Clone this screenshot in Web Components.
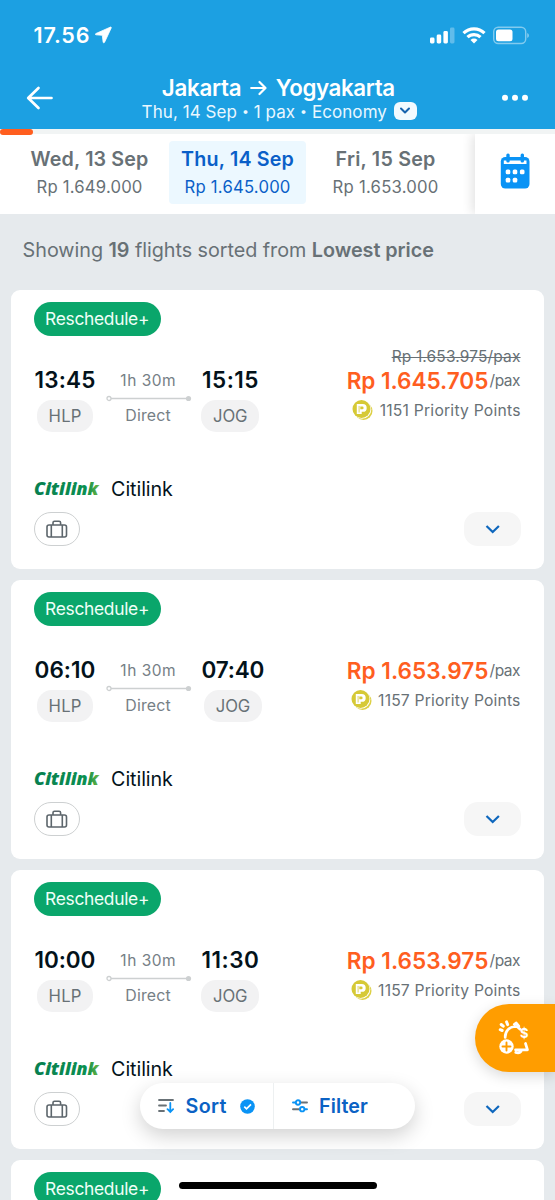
<!DOCTYPE html>
<html lang="en">
<head>
<meta charset="utf-8">
<title>Jakarta → Yogyakarta</title>
<style>
html,body{margin:0;padding:0}
body{width:555px;height:1200px;overflow:hidden;background:#e6eaed;font-family:Inter,"Liberation Sans",sans-serif}
</style>
</head>
<body>
<flight-search-page></flight-search-page>
<script>
const define = (name, html, after) => customElements.define(name, class extends HTMLElement {
  connectedCallback() {
    if (this.shadowRoot) return;
    const root = this.attachShadow({ mode: 'open' });
    root.innerHTML = typeof html === 'function' ? html(this) : html;
    if (after) after(this, root);
  }
});

/* One line of text: s size, b weight, l line height, w tracked width, d baseline drop */
define('text-line', el => { const d = +el.getAttribute('d') || 0; return `<style>
  :host{display:block;white-space:nowrap;font-family:Inter,"Liberation Sans",sans-serif}
  span{display:inline-block;vertical-align:top;margin-top:${d}px;margin-bottom:${-d}px;font-size:${el.getAttribute('s')}px;font-weight:${el.getAttribute('b') || 400};line-height:${el.getAttribute('l') || 24}px}
  </style><span><slot></slot></span>`; }, (el, root) => {
  const w = +el.getAttribute('w'), span = root.querySelector('span'), side = .6;
  if (!w) return;
  const n = el.textContent.length;
  const ls = (w - 2 * side - span.getBoundingClientRect().width) / (n - 1);
  span.style.letterSpacing = ls + 'px';
  span.style.marginLeft = side + 'px';
  span.style.marginRight = side - ls + 'px';
});

define('status-bar', `<style>
  :host{display:flex;height:70px;box-sizing:border-box;padding:0 26px 0 33px;align-items:center;color:#fff}
  .r{margin-left:auto}svg{display:block}.l{margin-left:5px}
  </style>
  <text-line s="21.5" b="600" w="57">17.56</text-line>
  <svg class="l" width="17" height="18" viewBox="0 0 17 18"><path d="M15.200 1.200 1 7.500C0 8 .2 8.700 1 8.800L7.300 9.300 8.100 16c.1 1 1 1.100 1.500.2L16.200 2C16.500 1.300 16 .8 15.200 1.200Z" fill="#fff" stroke="#fff" stroke-width=".8"/></svg>
  <svg class="r" width="102" height="20" viewBox="0 0 102 20" fill="#fff">
    <rect x="3" y="12.500" width="4.500" height="6" rx="1.400"/><rect x="9.700" y="9.500" width="4.500" height="9" rx="1.400"/><rect x="16.400" y="6" width="4.500" height="12.500" rx="1.400"/><rect x="23" y="2.500" width="4.500" height="16" rx="1.400" opacity=".3"/>
    <g fill="none" stroke="#fff" stroke-width="3.200"><path d="M36.500 8.200a15 15 0 0 1 21 0"/><path d="M40.500 12.200a9.300 9.300 0 0 1 13 0"/></g><path d="M43.500 15a5 5 0 0 1 7 0L47 18.600Z"/>
    <rect x="66.700" y="2.200" width="32" height="16.300" rx="4.500" fill="none" stroke="#fff" stroke-width="1.400" opacity=".45"/><rect x="69" y="4.500" width="16.500" height="11.800" rx="2.500"/><path d="M100.200 8v5q1.800-.8 1.800-2.500t-1.800-2.500" opacity=".45"/>
  </svg>`);

define('route-nav', `<style>
  :host{display:grid;grid-template-columns:27px 1fr 27px;height:59px;padding:0 26px;color:#fff}
  svg{display:block}.side{padding-top:15px}.c{padding-top:6px;display:flex;flex-direction:column;align-items:center}
  .sub{display:flex;gap:6px;align-items:center;color:#e9f7ff;margin-left:2.500px;height:24px}
  .title{display:flex;gap:8px;align-items:center;height:24px;margin-left:2px}
  .dot{font-size:.72em;vertical-align:.13em}
  .pill{width:23px;height:18px;border-radius:6px;background:#f2faff;display:grid;place-items:center;margin-top:-3px}
  </style>
  <svg class="side" width="28" height="26" viewBox="0 0 28 26"><path d="M12.500 3 2.200 13 12.500 23M2.500 13H25.500" fill="none" stroke="#fff" stroke-width="2.700" stroke-linecap="round" stroke-linejoin="round"/></svg>
  <div class="c"><div class="title"><text-line s="22.300" b="600" w="81">Jakarta</text-line>
    <svg width="17" height="16" viewBox="0 0 17 16"><path d="M1.200 8H15.500M9.500 2l6 6-6 6" fill="none" stroke="#fff" stroke-width="2.200" stroke-linecap="round" stroke-linejoin="round"/></svg>
    <text-line s="22.300" b="600" w="120.500">Yogyakarta</text-line></div>
    <div class="sub"><text-line s="17" w="246.500">Thu, 14 Sep <span class="dot">•</span> 1 pax <span class="dot">•</span> Economy</text-line><span class="pill"><svg width="12" height="8" viewBox="0 0 12 8"><path d="m2 1.500 4 4 4-4" fill="none" stroke="#1763ae" stroke-width="2" stroke-linecap="round" stroke-linejoin="round"/></svg></span></div></div>
  <svg class="side" width="28" height="26" viewBox="0 0 28 26" fill="#fff"><circle cx="3" cy="12.700" r="3"/><circle cx="13" cy="12.700" r="3"/><circle cx="23" cy="12.700" r="3"/></svg>`);

define('load-progress', `<style>:host{display:block;height:5px;background:#f1f4f4}
  div{width:33px;height:5.700px;border-radius:3px;background:#ff5e1f;position:relative}</style><div></div>`);

define('date-tab', el => `<style>
  :host{display:flex;flex-direction:column;align-items:center;width:137px;height:63px;box-sizing:border-box;padding-top:5px;gap:5px;border-radius:4px;color:#687176}
  :host([selected]){background:#ecf8ff;color:#0a5fc8}
  </style><text-line s="19.700" b="600" d="1" w="${el.getAttribute('dw')}">${el.getAttribute('day')}</text-line><text-line s="16.700" w="107">${el.getAttribute('price')}</text-line>`);

define('date-strip', `<style>
  :host{display:flex;height:80px;background:#fff;overflow:hidden}
  .tabs{display:flex;gap:11px;padding:7px 0 0 21px;width:454px}
  .cal{flex:1;box-shadow:-3px 0 10px #0000001c;display:flex;justify-content:center;padding-top:19px;background:#fff}
  </style><div class="tabs"><date-tab day="Wed, 13 Sep" dw="119" price="Rp 1.649.000"></date-tab>
  <date-tab selected day="Thu, 14 Sep" dw="114" price="Rp 1.645.000"></date-tab><date-tab day="Fri, 15 Sep" dw="101" price="Rp 1.653.000"></date-tab></div>
  <div class="cal"><svg width="30" height="36" viewBox="0 0 30 36"><rect x=".8" y="4" width="28.700" height="31.500" rx="4.500" fill="#0a93f5"/><rect x="3.800" y="7.500" width="22.700" height="3.500" fill="#fff"/><rect x="6.300" y=".5" width="3.400" height="9" rx="1.500" fill="#0a93f5"/><rect x="20.600" y=".5" width="3.400" height="9" rx="1.500" fill="#0a93f5"/>
  <g fill="#fff"><rect x="5.700" y="16.500" width="4.600" height="4.800" rx="1.500"/><rect x="12.700" y="16.500" width="4.600" height="4.800" rx="1.500"/><rect x="19.900" y="16.500" width="4.600" height="4.800" rx="1.500"/><rect x="5.700" y="24.800" width="4.600" height="4.800" rx="1.500"/><rect x="12.700" y="24.800" width="4.600" height="4.800" rx="1.500"/></g></svg></div>`);

define('result-summary', `<style>:host{display:block;height:76px;box-sizing:border-box;padding:24px 0 0 22px;color:#687176}b{font-weight:600}</style>
  <text-line s="19.800" w="412.500">Showing <b>19</b> flights sorted from <b>Lowest price</b></text-line>`);

define('airport-stop', el => `<style>
  :host{display:flex;flex-direction:column;gap:8px;align-items:center}
  .time{color:#03121a}.code{height:32px;padding:0 11.500px;border-radius:15px;background:#f2f2f3;color:#687176;display:flex;align-items:center}
  </style><text-line class="time" s="22.500" b="600" w="${el.getAttribute('tw')}">${el.getAttribute('time')}</text-line>
  <div class="code"><text-line s="16.700" w="${el.getAttribute('cw')}">${el.getAttribute('code')}</text-line></div>`);

define('flight-duration', `<style>:host{display:flex;flex-direction:column;align-items:center;width:86px;padding-bottom:6px;color:#768086}svg{display:block}text-line{margin-right:2px}</style>
  <text-line s="15.500" l="20" d="1" w="56.500">1h 30m</text-line>
  <svg width="86" height="16" viewBox="0 0 86 16"><path d="M5 8.500H81" stroke="#cdd0d1" stroke-width="1.300"/><circle cx="3" cy="8.500" r="2" fill="#fff" stroke="#cdd0d1" stroke-width="1.300"/><circle cx="82.500" cy="8.500" r="2.600" fill="#cdd0d1"/></svg>
  <text-line s="15.900" l="20" w="46.500">Direct</text-line>`);

define('price-block', el => `<style>
  :host{display:flex;flex-direction:column;align-items:flex-end;padding-bottom:12px;margin-left:auto;color:#687176}
  .old{margin-bottom:2px}
  .now{display:flex;align-items:baseline;height:24px}.amt{color:#ff5e1f}
  .pts{display:flex;height:20px;margin-top:8px;gap:6px}svg{display:block}
  s{text-decoration:line-through;text-decoration-thickness:1.300px}
  </style>${el.hasAttribute('old') ? `<text-line class="old" s="15.500" l="20" d="1" w="130"><s>${el.getAttribute('old')}</s></text-line>` : ''}
  <div class="now"><text-line class="amt" s="22.600" b="600" d="1" w="143">${el.getAttribute('now')}</text-line><text-line s="15.500" d="1" w="32">/pax</text-line></div>
  <div class="pts"><svg width="21" height="20" viewBox="0 0 21 20"><circle cx="11.500" cy="11" r="9" fill="#ddd045"/><circle cx="10" cy="9.500" r="9.300" fill="#fff"/><circle cx="9.500" cy="9" r="9" fill="#d6c936"/><path d="M4.800 4H10.800a3.900 3.900 0 0 1 0 7.800H9.700V14H4.800ZM8.300 6.600V9.200H10.300a1.300 1.300 0 0 0 0-2.600Z" fill="#fff" fill-rule="evenodd"/><path d="M7.100 6V12.500" stroke="#d6c936" stroke-width=".8"/></svg>
  <text-line s="15.700" l="20" w="${el.getAttribute('pw')}" d="1">${el.getAttribute('points')} Priority Points</text-line></div>`);

define('citilink-logo', `<style>:host{display:block;width:66px;height:25px;overflow:visible}svg{display:block}</style>
  <svg width="66" height="25" viewBox="0 0 66 25"><defs><linearGradient id="g"><stop offset="0" stop-color="#087f50"/><stop offset=".82" stop-color="#0c9050"/><stop offset="1" stop-color="#78b83c"/></linearGradient></defs><text x="0" y="18.900" font-family="Open Sans" font-weight="800" font-style="italic" font-size="17" textLength="64.500" lengthAdjust="spacingAndGlyphs" fill="url(#g)">Citilink</text></svg>`);

define('expand-button', `<style>:host{display:grid;place-items:center;width:57px;height:34px;border-radius:14px;background:#f6f6f6}svg{display:block}</style>
  <svg width="16" height="10" viewBox="0 0 16 10"><path d="m1.500 2 6.200 6 6.200-6" fill="none" stroke="#0e67bd" stroke-width="2.200"/></svg>`);

define('baggage-chip', `<style>:host{display:grid;place-items:center;width:46px;height:34px;box-sizing:border-box;border:1.300px solid #cdd0d1;border-radius:17px}svg{display:block}</style>
  <svg width="22" height="18" viewBox="0 0 22 18" fill="none" stroke="#5d666c" stroke-width="1.600"><rect x="1" y="5" width="19.500" height="12" rx="2"/><path d="M5.300 5v12M16.300 5v12M7 5V2.700Q7 1.200 8.500 1.200h4.600Q14.600 1.200 14.600 2.700V5"/></svg>`);

define('flight-card', el => { const a = n => el.getAttribute(n); return `<style>
  :host{display:block;height:279px;box-sizing:border-box;padding:11px 23px 23px;border-radius:9px;background:#fff}
  .badge{display:inline-flex;align-items:center;height:34px;margin:.5px 0 10.500px;padding:0 11px 0 10.500px;border-radius:17px;background:#0aa66b;color:#effff8;vertical-align:top}
  .row{display:flex;height:86px;align-items:flex-end}
  flight-duration{margin:0 9px 0 10px}
  .air{display:flex;gap:10.500px;height:25px;margin-top:44px;color:#03121a}
  .bottom{display:flex;justify-content:space-between;margin-top:11px}
  </style><div class="badge"><text-line s="17.400" w="105.500">Reschedule+</text-line></div>
  ${a('dep') ? `<div class="row"><airport-stop time="${a('dep')}" tw="62" code="HLP" cw="34"></airport-stop><flight-duration></flight-duration>
  <airport-stop time="${a('arr')}" tw="${a('tw')}" code="JOG" cw="35.500"></airport-stop>
  <price-block ${a('old') ? `old="${a('old')}"` : ''} now="${a('price')}" points="${a('points')}" pw="${a('pw')}"></price-block></div>
  <div class="air"><citilink-logo></citilink-logo><text-line s="19.700" l="25" d="1" w="63">Citilink</text-line></div>
  <div class="bottom"><baggage-chip></baggage-chip><expand-button></expand-button></div>` : ''}`; });

define('sort-filter-bar', `<style>
  :host{position:absolute;left:140px;top:1083px;width:275px;height:46px;border-radius:23px;background:#fff;display:flex;color:#0b62c4;box-shadow:0 7px 20px #0000002e}
  div{display:flex;align-items:center}svg{display:block}
  .s{width:134px;box-sizing:border-box;padding-left:18px;border-right:1px solid #edf0f1}.f{padding-left:17.500px}
  .s text-line{margin:0 13px 0 11px}.f text-line{margin-left:11px}
  </style><div class="s"><svg width="16" height="16" viewBox="0 0 16 16" fill="none" stroke-width="1.800" stroke-linecap="round"><path d="M1 2H15M1 7.500H8M1 13H6" stroke="#687176"/><path d="M12.300 5V13.500M9.500 11.200l2.800 2.800 2.800-2.800" stroke="#0a93f5"/></svg>
  <text-line s="19.700" b="600" w="42">Sort</text-line><svg width="15" height="15" viewBox="0 0 15 15"><circle cx="7.500" cy="7.500" r="7.300" fill="#0a93f5"/><path d="m4.300 7.700 2.200 2.200L11 5.300" fill="none" stroke="#fff" stroke-width="1.700"/></svg></div>
  <div class="f"><svg width="16" height="14" viewBox="0 0 16 14" fill="none" stroke-width="1.900" stroke-linecap="round"><path d="M9 3.500H15M1 10.200H7" stroke="#687176"/><path d="M1 3.500H3.500M13 10.200H15" stroke="#0a93f5"/><circle cx="6" cy="3.500" r="2.200" stroke="#0a93f5"/><circle cx="10.200" cy="10.200" r="2.200" stroke="#0a93f5"/></svg>
  <text-line s="19.700" b="600" w="50">Filter</text-line></div>`);

define('price-alert-button', `<style>
  :host{position:absolute;left:475px;top:1004px;width:80px;height:68px;box-sizing:border-box;padding:16px 0 0 23px;border-radius:34px 0 0 34px;background:#ff9d00;box-shadow:0 4px 14px #00000026}svg{display:block}
  </style><svg width="34" height="36" viewBox="0 0 34 36" fill="none" stroke="#fff" stroke-width="2.700" stroke-linecap="round" stroke-linejoin="round">
  <path d="M7.200 17.500C7 11 11.500 6.800 17 6.500l2.300.2 2.800 2.600M16.300 4.300l2-1.300 2.500 3.200"/>
  <path d="M27.500 23.500l2 6.300H17.500M23 31.500q-1.500 2-5.300 1"/>
  <path d="M8.600 1.900l1 2.700M3.200 4.500l2 1.700M2.200 9.700l2 .8" stroke-width="3"/>
  <circle cx="8.500" cy="26.500" r="7.200" fill="#fff" stroke="none"/><path d="M8.500 22.500v8M4.500 26.500h8" stroke="#ff9d00" stroke-width="1.900"/>
  <text x="22" y="18" fill="#fff" stroke="none" font-family="Inter,sans-serif" font-weight="700" font-size="13">$</text></svg>`);

define('home-indicator', `<style>:host{position:absolute;left:179px;top:1181.500px;width:198px;height:7px;border-radius:4px;background:#000}</style>`);

define('flight-search-page', `<style>
  :host{display:block;position:relative;width:555px;height:1200px;overflow:hidden;background:#e6eaed}
  header{background:#1ca0e2}main{display:flex;flex-direction:column;gap:11px;padding:0 11px}
  </style><header><status-bar></status-bar><route-nav></route-nav></header><load-progress></load-progress><date-strip></date-strip><result-summary></result-summary>
  <main><flight-card dep="13:45" arr="15:15" tw="57.500" old="Rp 1.653.975/pax" price="Rp 1.645.705" points="1151" pw="142"></flight-card>
  <flight-card dep="06:10" arr="07:40" tw="64" price="Rp 1.653.975" points="1157" pw="143.500"></flight-card>
  <flight-card dep="10:00" arr="11:30" tw="58.500" price="Rp 1.653.975" points="1157" pw="143.500"></flight-card>
  <flight-card></flight-card></main>
  <price-alert-button></price-alert-button><sort-filter-bar></sort-filter-bar><home-indicator></home-indicator>`);
</script>
</body>
</html>
